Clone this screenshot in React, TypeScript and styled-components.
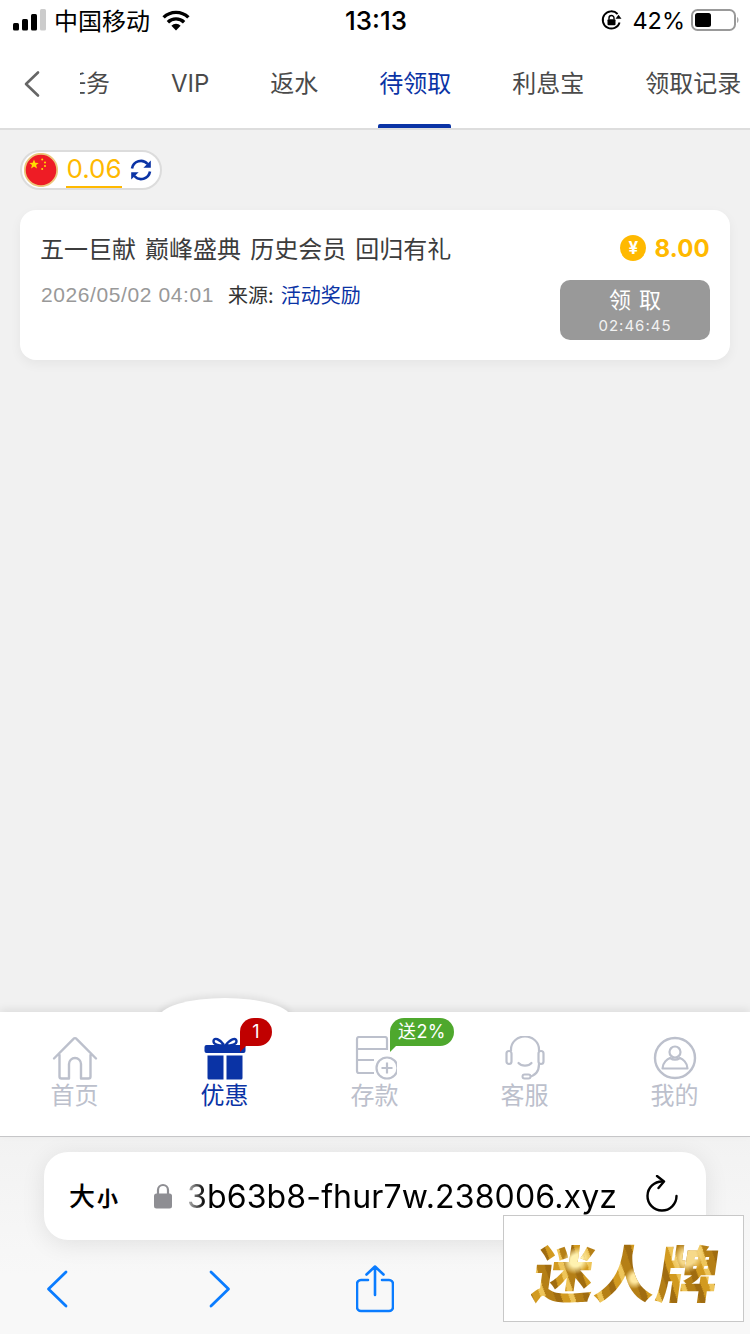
import React from "react";
import styled, { createGlobalStyle } from "styled-components";

const CJK = `"Noto Sans CJK SC", "Noto Sans", sans-serif`;
const LATIN = `Inter, "Noto Sans CJK SC", sans-serif`;
const BLUE = "#0a33a5";
const GOLD = "#ffb900";
const MUTED = "#bcc0cc";

const Global = createGlobalStyle`
  html, body { margin: 0; padding: 0; background: #f1f1f1; }
  * { box-sizing: border-box; }
`;

const Page = styled.div`
  position: relative;
  width: 750px;
  height: 1334px;
  display: flex;
  flex-direction: column;
  overflow: hidden;
  background: #f1f1f1;
  font-family: ${CJK};
`;

const StatusBar = styled.div`
  height: 40px;
  background: #fff;
  display: grid;
  grid-template-columns: 1fr auto 1fr;
  align-items: center;
  padding: 0 11px 0 13px;
  color: #000;
`;
const StatusSide = styled.div<{ $end?: boolean }>`
  display: flex;
  align-items: center;
  justify-content: ${(p) => (p.$end ? "flex-end" : "flex-start")};
`;
const Carrier = styled.span`
  font-size: 24px;
  line-height: 40px;
  margin: 0 11px 0 7px;
`;
const Clock = styled.span`
  font-family: ${LATIN};
  font-size: 26px;
  font-weight: 500;
`;
const Percent = styled.span`
  font-family: ${LATIN};
  font-size: 23.5px;
  margin: 0 6px 0 10px;
`;

const Nav = styled.div`
  height: 90px;
  background: #fff;
  border-bottom: 2px solid #ddd;
  display: flex;
`;
const BackButton = styled.div`
  width: 80px;
  flex: none;
  padding-left: 22px;
  display: flex;
  align-items: center;
`;
const TabViewport = styled.div`
  flex: 1;
  overflow: hidden;
`;
const TabTrack = styled.div`
  display: flex;
  gap: 61px;
  margin-left: -18px;
  white-space: nowrap;
`;
const Tab = styled.div<{ $active?: boolean }>`
  position: relative;
  height: 88px;
  line-height: 88px;
  font-size: 24px;
  color: ${(p) => (p.$active ? BLUE : "#4a4a4a")};
  font-family: ${LATIN};
  &::after {
    content: "";
    display: ${(p) => (p.$active ? "block" : "none")};
    position: absolute;
    left: -1px;
    right: 0;
    bottom: 0;
    height: 4px;
    border-radius: 2px 2px 0 0;
    background: ${BLUE};
  }
`;

const Main = styled.main`
  flex: 1;
  min-height: 0;
  padding: 20px;
  display: flex;
  flex-direction: column;
  align-items: stretch;
  gap: 20px;
`;
const BalanceChip = styled.div`
  align-self: flex-start;
  width: 142px;
  height: 40px;
  border: 2px solid #dcdcdc;
  border-radius: 20px;
  background: #fff;
  display: flex;
  align-items: center;
  padding-left: 2px;
`;
const Amount = styled.span`
  margin-left: 8px;
  width: 56px;
  height: 36px;
  line-height: 34px;
  font-size: 26px;
  text-align: center;
  color: ${GOLD};
  font-family: ${LATIN};
  border-bottom: 2px solid ${GOLD};
`;
const RefreshWrap = styled.span`
  margin-left: 8px;
  display: flex;
`;

const Card = styled.section`
  height: 150px;
  background: #fff;
  border-radius: 16px;
  box-shadow: 0 4px 12px rgba(0, 0, 0, 0.05);
  padding: 20px;
  display: flex;
  flex-direction: column;
  gap: 14px;
`;
const CardRow = styled.div`
  display: flex;
  justify-content: space-between;
  align-items: flex-start;
`;
const CardTitle = styled.div`
  font-size: 24px;
  line-height: 36px;
  color: #3c3c3c;
  word-spacing: 3.7px;
`;
const Prize = styled.div`
  display: flex;
  align-items: center;
  height: 36px;
  gap: 8px;
  font-family: ${LATIN};
  font-size: 24px;
  font-weight: 700;
  letter-spacing: 0.2px;
  color: ${GOLD};
`;
const Coin = styled.span`
  width: 26px;
  height: 26px;
  border-radius: 50%;
  background: ${GOLD};
  color: #fff;
  font-size: 17px;
  line-height: 26px;
  text-align: center;
  font-weight: 700;
  letter-spacing: 0;
`;
const Meta = styled.div`
  font-size: 20px;
  line-height: 30px;
  color: #333;
  display: flex;
  margin-left: 1px;
`;
const MetaDate = styled.span`
  color: #999;
  font-family: "Liberation Sans", sans-serif;
  font-size: 21px;
  letter-spacing: 0.6px;
  margin-right: 14px;
`;
const Source = styled.span`
  color: ${BLUE};
  margin-left: 7px;
`;
const ClaimButton = styled.div`
  width: 150px;
  height: 60px;
  border-radius: 10px;
  background: #999;
  color: #fff;
  text-align: center;
  padding-top: 3px;
`;
const ClaimLabel = styled.div`
  font-size: 22px;
  line-height: 30px;
  word-spacing: 3px;
`;
const ClaimTime = styled.div`
  font-family: ${LATIN};
  font-size: 15px;
  line-height: 20px;
  margin-top: 3px;
  letter-spacing: 1px;
  color: #f2f2f2;
`;

const TabBar = styled.nav`
  position: relative;
  flex: none;
  height: 125px;
  background: #fff;
  border-bottom: 1px solid #c6c6c8;
  box-shadow: 0 -3px 8px rgba(0, 0, 0, 0.08);
  display: flex;
  &::before {
    content: "";
    position: absolute;
    left: 159px;
    top: -14px;
    width: 132px;
    height: 40px;
    border-radius: 66px / 20px;
    background: #fff;
    box-shadow: 0 -3px 6px rgba(0, 0, 0, 0.07);
    clip-path: inset(-10px -10px 26px -10px);
  }
`;
const TabItem = styled.div<{ $active?: boolean }>`
  position: relative;
  flex: 1;
  display: flex;
  flex-direction: column;
  align-items: center;
  padding: 24px 1px 0 0;
  color: ${(p) => (p.$active ? BLUE : MUTED)};
`;
const TabIcon = styled.div`
  height: 44px;
  display: flex;
  align-items: center;
  justify-content: center;
`;
const TabLabel = styled.div`
  font-size: 24px;
  line-height: 28px;
`;
const Bubble = styled.div<{ $bg: string; $left: number }>`
  position: absolute;
  top: 6px;
  left: ${(p) => p.$left}px;
  height: 28px;
  min-width: 32px;
  padding: 0 8px;
  border-radius: 14px 14px 14px 0;
  background: ${(p) => p.$bg};
  color: #fff;
  font-size: 18px;
  line-height: 27px;
  text-align: center;
  white-space: nowrap;
  letter-spacing: 0.4px;
  font-family: ${LATIN};
  &::after {
    content: "";
    position: absolute;
    left: 0;
    bottom: -6px;
    border-left: 7px solid ${(p) => p.$bg};
    border-bottom: 7px solid transparent;
  }
`;

const Browser = styled.div`
  flex: none;
  height: 197px;
  background: linear-gradient(#f2f2f2, #f8f8f8 70%);
  display: flex;
  flex-direction: column;
  padding-top: 15px;
`;
const UrlPill = styled.div`
  height: 88px;
  margin: 0 44px;
  background: #fff;
  border-radius: 24px;
  box-shadow: 0 4px 24px rgba(0, 0, 0, 0.09);
  display: flex;
  align-items: center;
  padding-left: 25px;
  color: #000;
`;
const SizeLabel = styled.span`
  width: 85px;
  font-size: 26px;
  font-weight: 500;
  line-height: 40px;
  & > small {
    font-size: 21px;
    font-weight: 600;
    margin-left: 2px;
  }
`;
const UrlText = styled.span`
  margin-left: 15px;
  width: 431px;
  font-family: ${LATIN};
  font-size: 32px;
  white-space: nowrap;
  letter-spacing: 0.15px;
  -webkit-mask-image: linear-gradient(90deg, rgba(0, 0, 0, 0.25) 0, #000 18px);
  mask-image: linear-gradient(90deg, rgba(0, 0, 0, 0.25) 0, #000 18px);
`;
const ReloadWrap = styled.span`
  margin: -4px 0 0 27px;
  display: flex;
`;
const Toolbar = styled.div`
  margin-top: 25px;
  padding-left: 46px;
  display: flex;
  align-items: center;
  height: 48px;
`;
const ToolGap = styled.span<{ $w: number }>`
  width: ${(p) => p.$w}px;
`;

const Watermark = styled.div`
  position: absolute;
  left: 503px;
  top: 1215px;
  width: 241px;
  height: 107px;
  background: #fff;
  border: 1.5px solid #c8c8c8;
  display: flex;
  align-items: center;
  justify-content: center;
`;
const WatermarkText = styled.span`
  font-family: ${CJK};
  font-size: 61px;
  font-weight: 900;
  line-height: 70px;
  letter-spacing: 1px;
  transform: skewX(-8deg);
  margin: 4px 0 0 8px;
  background:
    radial-gradient(circle at 22% 35%, #fff2b0 0 4%, transparent 9%),
    radial-gradient(circle at 55% 60%, #ffe9a0 0 4%, transparent 10%),
    radial-gradient(circle at 82% 30%, #f6d98a 0 5%, transparent 10%),
    repeating-linear-gradient(65deg, #a06c10 0 6px, #d29a20 6px 13px, #eec55a 13px 18px, #b57f16 18px 26px);
  -webkit-background-clip: text;
  background-clip: text;
  color: transparent;
`;

const Signal = () => (
  <svg width="34" height="22" viewBox="0 0 34 22" aria-hidden>
    <rect x="0" y="14" width="6" height="7.5" rx="1.5" fill="#000" />
    <rect x="9" y="10" width="6" height="11.5" rx="1.5" fill="#000" />
    <rect x="18" y="5" width="6" height="16.5" rx="1.5" fill="#000" />
    <rect x="27" y="0" width="6" height="21.5" rx="1.5" fill="#ccc" />
  </svg>
);
const Wifi = () => (
  <svg width="30" height="22" viewBox="0 0 30 22" aria-hidden>
    <path d="M15 21.5l-4.6-4.8a6.6 6.6 0 0 1 9.2 0z" fill="#000" />
    <path d="M6.9 13.2a11.6 11.6 0 0 1 16.2 0M2.6 8.4a17.8 17.8 0 0 1 24.8 0" fill="none" stroke="#000" strokeWidth="3.4" />
  </svg>
);
const RotationLock = () => (
  <svg width="21" height="21" viewBox="0 0 21 21" aria-hidden>
    <path d="M18.6 12.4A8.6 8.6 0 1 1 16.6 4" fill="none" stroke="#000" strokeWidth="1.9" />
    <path d="M14.5 8.8h6l-3-4z" fill="#000" />
    <rect x="6.5" y="9.3" width="8" height="6" rx="1" fill="#000" />
    <path d="M8 9.5V8a2.5 2.5 0 0 1 5 0v1.5" fill="none" stroke="#000" strokeWidth="1.4" />
  </svg>
);
const Battery = () => (
  <svg width="48" height="22" viewBox="0 0 48 22" aria-hidden>
    <rect x="1" y="1" width="43" height="20" rx="5.5" fill="none" stroke="#999" strokeWidth="2" />
    <rect x="4" y="4" width="16" height="14" rx="2.5" fill="#000" />
    <path d="M46 8c1 .5 1.5 1.6 1.5 3s-.5 2.5-1.5 3z" fill="#aaa" />
  </svg>
);
const BackChevron = () => (
  <svg width="20" height="28" viewBox="0 0 20 28" aria-hidden>
    <path d="M16 2.5L4 14l12 11.5" fill="none" stroke="#666" strokeWidth="2.6" strokeLinecap="round" strokeLinejoin="round" />
  </svg>
);
const Flag = () => (
  <svg width="34" height="34" viewBox="0 0 34 34" aria-hidden>
    <circle cx="17" cy="17" r="16.2" fill="#ee1c25" stroke="#ecc77c" strokeWidth="1.8" />
    <path d="M10 6.6l1.3 3.1 3.4.2-2.6 2.2.9 3.3-3-1.9-2.9 1.9.9-3.3-2.7-2.2 3.4-.2z" fill="#ffde00" />
    <circle cx="18.2" cy="6.5" r="1" fill="#ffde00" />
    <circle cx="21" cy="9.5" r="1" fill="#ffde00" />
    <circle cx="21" cy="13" r="1" fill="#ffde00" />
    <circle cx="18.2" cy="16" r="1" fill="#ffde00" />
  </svg>
);
const Refresh = () => (
  <svg width="22" height="22" viewBox="0 0 22 22" aria-hidden>
    <path d="M2 9.4A9 9 0 0 1 17.6 5" fill="none" stroke={BLUE} strokeWidth="2.6" />
    <path d="M20.8 1.4v7.4h-7.4z" fill={BLUE} />
    <path d="M20 12.6A9 9 0 0 1 4.4 17" fill="none" stroke={BLUE} strokeWidth="2.6" />
    <path d="M1.2 20.6v-7.4h7.4z" fill={BLUE} />
  </svg>
);
const HomeIcon = () => (
  <svg width="46" height="44" viewBox="0 0 46 44" aria-hidden>
    <path
      d="M2 22.5L21.5 2.8a2 2 0 0 1 3 0L44 22.5M7.5 19v21.5a2 2 0 0 0 2 2h7.5V28a6 6 0 0 1 12 0v14.5h7.5a2 2 0 0 0 2-2V19"
      fill="none"
      stroke={MUTED}
      strokeWidth="2.4"
      strokeLinecap="round"
      strokeLinejoin="round"
    />
  </svg>
);
const GiftIcon = () => (
  <svg width="42" height="44" viewBox="0 0 42 44" aria-hidden>
    <path d="M20 9C16 3 10 1 9.500 5c-.4 3.500 5 4.500 10.500 4.500M21.500 9.500C26 3 32 1 32.500 5c.4 3.500-5 4.500-11 4.500" fill="none" stroke={BLUE} strokeWidth="2.4" />
    <rect x="0.500" y="9" width="41" height="8" rx="2" fill={BLUE} />
    <path d="M3.500 19.500H19.500V43.500H5a1.500 1.500 0 0 1-1.500-1.500zM22.500 19.500H38.500V42a1.500 1.500 0 0 1-1.500 1.500H22.500z" fill={BLUE} />
  </svg>
);
const DepositIcon = () => (
  <svg width="44" height="44" viewBox="-3 0 44 44" aria-hidden>
    <path d="M31 14V3a2 2 0 0 0-2-2H3a2 2 0 0 0-2 2v32a2 2 0 0 0 2 2h15M1 13h30M1 24h17" fill="none" stroke={MUTED} strokeWidth="2.2" />
    <circle cx="31" cy="32" r="10.500" fill="#fff" stroke={MUTED} strokeWidth="2.2" />
    <path d="M31 26.500v11M25.500 32h11" fill="none" stroke={MUTED} strokeWidth="2.200" />
  </svg>
);
const ServiceIcon = () => (
  <svg width="40" height="44" viewBox="0 0 40 44" aria-hidden>
    <path d="M6 15v-1.500a14 13 0 0 1 28 0V15" fill="none" stroke={MUTED} strokeWidth="2.200" />
    <rect x="1.500" y="15" width="5" height="13" rx="2.500" fill="none" stroke={MUTED} strokeWidth="2.200" />
    <rect x="33.500" y="15" width="5" height="13" rx="2.500" fill="none" stroke={MUTED} strokeWidth="2.200" />
    <path d="M13.500 27c3 3.500 10 3.500 13 0M34 28c0 8-4 12-11 13" fill="none" stroke={MUTED} strokeWidth="2.200" strokeLinecap="round" />
    <rect x="17.500" y="38.500" width="8" height="4" rx="2" fill="#fff" stroke={MUTED} strokeWidth="2" />
  </svg>
);
const ProfileIcon = () => (
  <svg width="44" height="44" viewBox="0 0 44 44" aria-hidden>
    <circle cx="22" cy="22" r="20" fill="none" stroke={MUTED} strokeWidth="2.400" />
    <circle cx="22" cy="16" r="5.500" fill="none" stroke={MUTED} strokeWidth="2.200" />
    <path d="M9.500 32.500c0-6 5-9.500 7.500-10.500 3 2 7 2 10 0 2.500 1 7.500 4.500 7.500 10.500z" fill="none" stroke={MUTED} strokeWidth="2.200" strokeLinejoin="round" />
  </svg>
);
const Lock = () => (
  <svg width="18" height="26" viewBox="0 0 18 26" aria-hidden>
    <path d="M4 12V7a5 5 0 0 1 10 0v5" fill="none" stroke="#8e8e93" strokeWidth="2.200" />
    <rect x="0" y="10.500" width="18" height="15" rx="2.500" fill="#8e8e93" />
  </svg>
);
const Reload = () => (
  <svg width="34" height="38" viewBox="0 0 34 38" aria-hidden>
    <path d="M17.500 6.500A14.500 14.500 0 1 0 31.500 21" fill="none" stroke="#000" strokeWidth="2.400" strokeLinecap="round" />
    <path d="M12 1l7 5.500-5.500 6.500" fill="none" stroke="#000" strokeWidth="2.400" strokeLinecap="round" strokeLinejoin="round" />
  </svg>
);
const ChevronBlue = ({ flip }: { flip?: boolean }) => (
  <svg width="22" height="38" viewBox="0 0 22 38" aria-hidden style={flip ? { transform: "scaleX(-1)" } : undefined}>
    <path d="M20 2L2.500 19 20 36" fill="none" stroke="#0a7cff" strokeWidth="2.800" strokeLinecap="round" strokeLinejoin="round" />
  </svg>
);
const Share = () => (
  <svg width="38" height="48" viewBox="0 0 38 48" aria-hidden>
    <path d="M12 15H5a4 4 0 0 0-4 4v23a4 4 0 0 0 4 4h28a4 4 0 0 0 4-4V19a4 4 0 0 0-4-4h-7" fill="none" stroke="#0a7cff" strokeWidth="2.600" strokeLinecap="round" />
    <path d="M19 30V2M10.500 9.500L19 1.500l8.500 8" fill="none" stroke="#0a7cff" strokeWidth="2.600" strokeLinecap="round" strokeLinejoin="round" />
  </svg>
);

const tabs = ["任务", "VIP", "返水", "待领取", "利息宝", "领取记录"];

export default function App() {
  return (
    <Page>
      <Global />
      <StatusBar>
        <StatusSide>
          <Signal />
          <Carrier>中国移动</Carrier>
          <Wifi />
        </StatusSide>
        <Clock>13:13</Clock>
        <StatusSide $end>
          <RotationLock />
          <Percent>42%</Percent>
          <Battery />
        </StatusSide>
      </StatusBar>
      <Nav>
        <BackButton>
          <BackChevron />
        </BackButton>
        <TabViewport>
          <TabTrack>
            {tabs.map((t) => (
              <Tab key={t} $active={t === "待领取"}>
                {t}
              </Tab>
            ))}
          </TabTrack>
        </TabViewport>
      </Nav>
      <Main>
        <BalanceChip>
          <Flag />
          <Amount>0.06</Amount>
          <RefreshWrap>
            <Refresh />
          </RefreshWrap>
        </BalanceChip>
        <Card>
          <CardRow>
            <CardTitle>五一巨献 巅峰盛典 历史会员 回归有礼</CardTitle>
            <Prize>
              <Coin>¥</Coin>
              8.00
            </Prize>
          </CardRow>
          <CardRow>
            <Meta>
              <MetaDate>2026/05/02 04:01</MetaDate>
              来源:<Source>活动奖励</Source>
            </Meta>
            <ClaimButton>
              <ClaimLabel>领 取</ClaimLabel>
              <ClaimTime>02:46:45</ClaimTime>
            </ClaimButton>
          </CardRow>
        </Card>
      </Main>
      <TabBar>
        <TabItem>
          <TabIcon>
            <HomeIcon />
          </TabIcon>
          <TabLabel>首页</TabLabel>
        </TabItem>
        <TabItem $active>
          <TabIcon>
            <GiftIcon />
          </TabIcon>
          <TabLabel>优惠</TabLabel>
          <Bubble $bg="#c00000" $left={90}>
            1
          </Bubble>
        </TabItem>
        <TabItem>
          <TabIcon>
            <DepositIcon />
          </TabIcon>
          <TabLabel>存款</TabLabel>
          <Bubble $bg="#4ea82d" $left={90}>
            送2%
          </Bubble>
        </TabItem>
        <TabItem>
          <TabIcon>
            <ServiceIcon />
          </TabIcon>
          <TabLabel>客服</TabLabel>
        </TabItem>
        <TabItem>
          <TabIcon>
            <ProfileIcon />
          </TabIcon>
          <TabLabel>我的</TabLabel>
        </TabItem>
      </TabBar>
      <Browser>
        <UrlPill>
          <SizeLabel>
            大<small>小</small>
          </SizeLabel>
          <Lock />
          <UrlText>3b63b8-fhur7w.238006.xyz</UrlText>
          <ReloadWrap>
            <Reload />
          </ReloadWrap>
        </UrlPill>
        <Toolbar>
          <ChevronBlue />
          <ToolGap $w={141} />
          <ChevronBlue flip />
          <ToolGap $w={125} />
          <Share />
        </Toolbar>
      </Browser>
      <Watermark>
        <WatermarkText>迷人牌</WatermarkText>
      </Watermark>
    </Page>
  );
}
